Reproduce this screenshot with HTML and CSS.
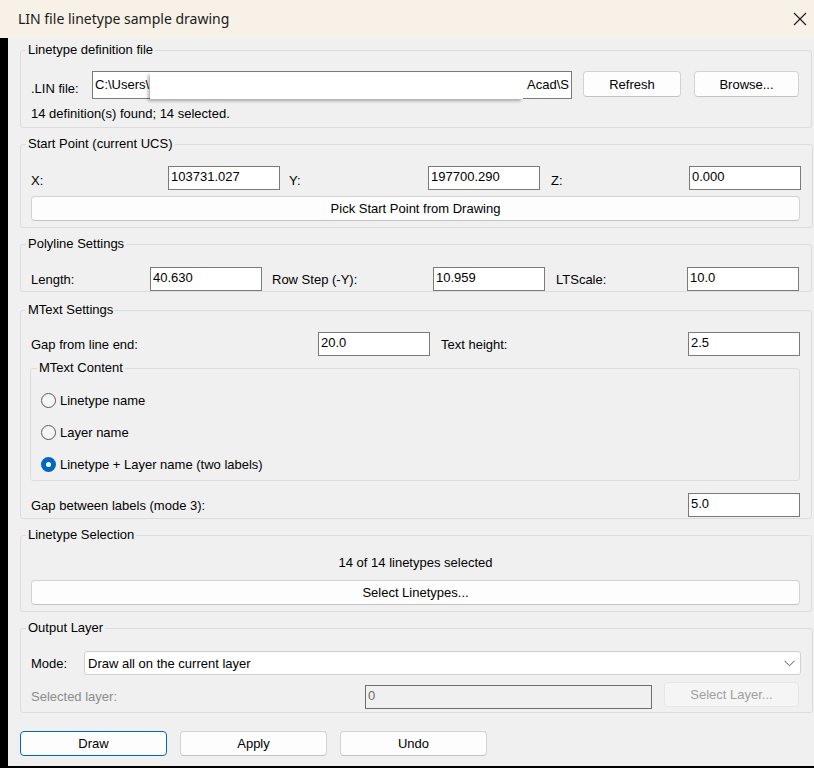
FILE: index.html
```html
<!DOCTYPE html>
<html lang="en">

<head>
    <meta charset="UTF-8">
    <title>LIN file linetype sample drawing</title>
    <link rel="stylesheet" href="styles.css">
</head>

<body>
    <div class="window">
        <div class="titlebar">
            <span class="title">LIN file linetype sample drawing</span>
            <svg class="close" width="14" height="14" viewBox="0 0 14 14">
                <path d="M1 1L13 13M13 1L1 13" stroke="#1a1a1a" stroke-width="1.1" fill="none" />
            </svg>
        </div>
        <div class="frame">
            <div class="content">
                <fieldset class="group g-file">
                    <legend>Linetype definition file</legend>
                    <div class="body">
                        <div class="file-row">
                            <span class="lbl lin-lbl">.LIN file:</span>
                            <div class="textbox path">
                                <span>C:\Users\</span><span>Acad\S</span>
                                <div class="cover"></div>
                            </div>
                            <button class="btn refresh">Refresh</button>
                            <button class="btn browse">Browse...</button>
                        </div>
                        <div class="status">14 definition(s) found; 14 selected.</div>
                    </div>
                </fieldset>

                <fieldset class="group g-start">
                    <legend>Start Point (current UCS)</legend>
                    <div class="body">
                        <div class="row xyz">
                            <span class="lbl">X:</span>
                            <div class="textbox">103731.027</div>
                            <span class="lbl pad9">Y:</span>
                            <div class="textbox">197700.290</div>
                            <span class="lbl pad11">Z:</span>
                            <div class="textbox">0.000</div>
                        </div>
                        <button class="btn wide pick">Pick Start Point from Drawing</button>
                    </div>
                </fieldset>

                <fieldset class="group g-poly">
                    <legend>Polyline Settings</legend>
                    <div class="body">
                        <div class="row poly">
                            <span class="lbl">Length:</span>
                            <div class="textbox">40.630</div>
                            <span class="lbl pad10">Row Step (-Y):</span>
                            <div class="textbox">10.959</div>
                            <span class="lbl pad11">LTScale:</span>
                            <div class="textbox">10.0</div>
                        </div>
                    </div>
                </fieldset>

                <fieldset class="group g-mtext">
                    <legend>MText Settings</legend>
                    <div class="body">
                        <div class="row gap-row">
                            <span class="lbl">Gap from line end:</span>
                            <div class="textbox">20.0</div>
                            <span class="lbl pad11">Text height:</span>
                            <div class="textbox">2.5</div>
                        </div>
                        <fieldset class="group inner">
                            <legend>MText Content</legend>
                            <div class="radios">
                                <div class="radio"><span class="dot"></span>Linetype name</div>
                                <div class="radio"><span class="dot"></span>Layer name</div>
                                <div class="radio"><span class="dot on"></span>Linetype + Layer name (two labels)</div>
                            </div>
                        </fieldset>
                        <div class="row labels-row">
                            <span class="lbl">Gap between labels (mode 3):</span>
                            <div class="textbox">5.0</div>
                        </div>
                    </div>
                </fieldset>

                <fieldset class="group g-sel">
                    <legend>Linetype Selection</legend>
                    <div class="body">
                        <div class="count">14 of 14 linetypes selected</div>
                        <button class="btn wide sel">Select Linetypes...</button>
                    </div>
                </fieldset>

                <fieldset class="group g-out">
                    <legend>Output Layer</legend>
                    <div class="body">
                        <div class="mode-row">
                            <span class="lbl mode-lbl">Mode:</span>
                            <div class="combo">
                                <span>Draw all on the current layer</span>
                                <svg width="11" height="7" viewBox="0 0 11 7">
                                    <path d="M0.5 0.8L5.5 5.8L10.5 0.8" stroke="#555" stroke-width="1" fill="none" />
                                </svg>
                            </div>
                        </div>
                        <div class="layer-row">
                            <span class="lbl disabled">Selected layer:</span>
                            <div class="textbox off">0</div>
                            <button class="btn off-btn">Select Layer...</button>
                        </div>
                    </div>
                </fieldset>

                <div class="actions">
                    <button class="btn action primary">Draw</button>
                    <button class="btn action">Apply</button>
                    <button class="btn action">Undo</button>
                </div>
            </div>
        </div>
    </div>
</body>

</html>
```

FILE: styles.css
```css
* {
    margin: 0;
    padding: 0;
    box-sizing: border-box;
}

body {
    width: 814px;
    height: 768px;
    overflow: hidden;
    background: #000;
    font: 13px "Liberation Sans", Arial, sans-serif;
    color: #000;
}

.titlebar {
    height: 38px;
    background: #f8f1e7;
    display: flex;
    align-items: center;
    justify-content: space-between;
    padding: 0 7px 0 18px;
}

.title {
    font: 14px "Noto Sans", sans-serif;
    color: #1a1a1a;
    padding-bottom: 1px;
}

.close {
    margin-bottom: 1px;
}

.frame {
    padding-left: 8px;
}

.content {
    height: 728px;
    background: #f0f0f0;
    padding: 4px 2px 0 12px;
}

/* group boxes */
.group {
    border: 1px solid #dcdcdc;
    border-radius: 3px;
    padding: 0;
}

.group + .group {
    margin-top: 8px;
}

.group legend {
    margin-left: 5px;
    padding: 0 2px;
    line-height: 16px;
}

.body {
    padding: 0 11px 0 10px;
}

.lbl {
    white-space: nowrap;
}

.pad9 { padding-left: 9px; }
.pad10 { padding-left: 10px; }
.pad11 { padding-left: 11px; }

.textbox {
    height: 24px;
    background: #fff;
    border: 1px solid #7a7a7a;
    padding: 2px 2px 0;
    line-height: 16px;
    white-space: nowrap;
    overflow: hidden;
}

.btn {
    font: 13px "Liberation Sans", Arial, sans-serif;
    color: #000;
    background: #fdfdfd;
    border: 1px solid #d3d3d3;
    border-bottom-color: #c2c2c2;
    border-radius: 4px;
    height: 26px;
}

.wide {
    display: block;
    width: 769px;
    height: 25px;
}

/* file */
.file-row {
    display: flex;
    align-items: flex-start;
    margin-top: 13px;
}

.lin-lbl {
    width: 61px;
    padding-top: 10px;
}

.path {
    position: relative;
    width: 480px;
    height: 28px;
    padding-top: 5px;
    display: flex;
    justify-content: space-between;
    overflow: visible;
}

.cover {
    position: absolute;
    left: 57px;
    top: 1px;
    width: 373px;
    height: 26px;
    background: #fff;
    box-shadow: -2px 2px 3px rgba(0, 0, 0, 0.3);
}

.refresh {
    width: 98px;
    margin-left: 11px;
}

.browse {
    width: 105px;
    margin-left: 13px;
}

.status {
    margin-top: 7px;
    line-height: 16px;
    padding-bottom: 5px;
}

/* rows of label + field */
.row {
    display: grid;
    align-items: center;
}

.xyz {
    grid-template-columns: 137px 112px 148px 112px 149px 112px;
    margin-top: 14px;
}

.xyz .lbl {
    padding-top: 5px;
}

.pick {
    margin: 6px 0 6px;
}

.poly {
    grid-template-columns: 119px 112px 171px 112px 142px 112px;
    margin-top: 15px;
}

.g-mtext {
    margin-top: 10px !important;
}

.gap-row {
    grid-template-columns: 287px 112px 258px 112px;
    margin-top: 14px;
}

.labels-row {
    grid-template-columns: 657px 112px;
    margin: 12px 0 1px;
}

/* radio group */
.inner {
    margin: 4px 0 0 -1px;
    width: 770px;
}

.inner legend {
    margin-left: 6px;
}

.radios {
    padding: 8px 0 0 10px;
}

.radio {
    height: 32px;
    display: flex;
    align-items: center;
    gap: 4px;
}

.dot {
    width: 15px;
    height: 15px;
    border-radius: 50%;
    border: 1px solid #5a5a5a;
    background: #f7f7f7;
}

.dot.on {
    border: 5px solid #0067c0;
    background: #fff;
}

/* selection */
.count {
    text-align: center;
    line-height: 16px;
    margin-top: 12px;
}

.sel {
    margin: 9px 0 6px;
}

/* output layer */
.mode-row {
    display: flex;
    align-items: center;
    margin-top: 15px;
}

.mode-lbl {
    width: 53px;
}

.combo {
    width: 717px;
    height: 24px;
    background: #fff;
    border: 1px solid #cfcfcf;
    border-radius: 3px;
    display: flex;
    align-items: center;
    justify-content: space-between;
    padding: 0 5px 0 3px;
}

.layer-row {
    display: flex;
    align-items: flex-start;
    margin-top: 7px;
    padding-bottom: 3px;
    height: 30px;
}

.disabled {
    color: #8c8c8c;
    width: 334px;
    line-height: 16px;
    padding-top: 7px;
}

.off {
    width: 287px;
    background: #f0f0f0;
    border-color: #6d6d6d;
    color: #6d6d6d;
    margin-top: 3px;
}

.off-btn {
    width: 135px;
    height: 25px;
    margin-left: 12px;
    background: #f5f5f5;
    border-color: #e6e6e6;
    color: #a0a0a0;
}

/* bottom buttons */
.actions {
    display: flex;
    gap: 13px;
    margin-top: 18px;
}

.action {
    width: 147px;
    height: 25px;
}

.primary {
    border: 1px solid #0067c0;
}
```
